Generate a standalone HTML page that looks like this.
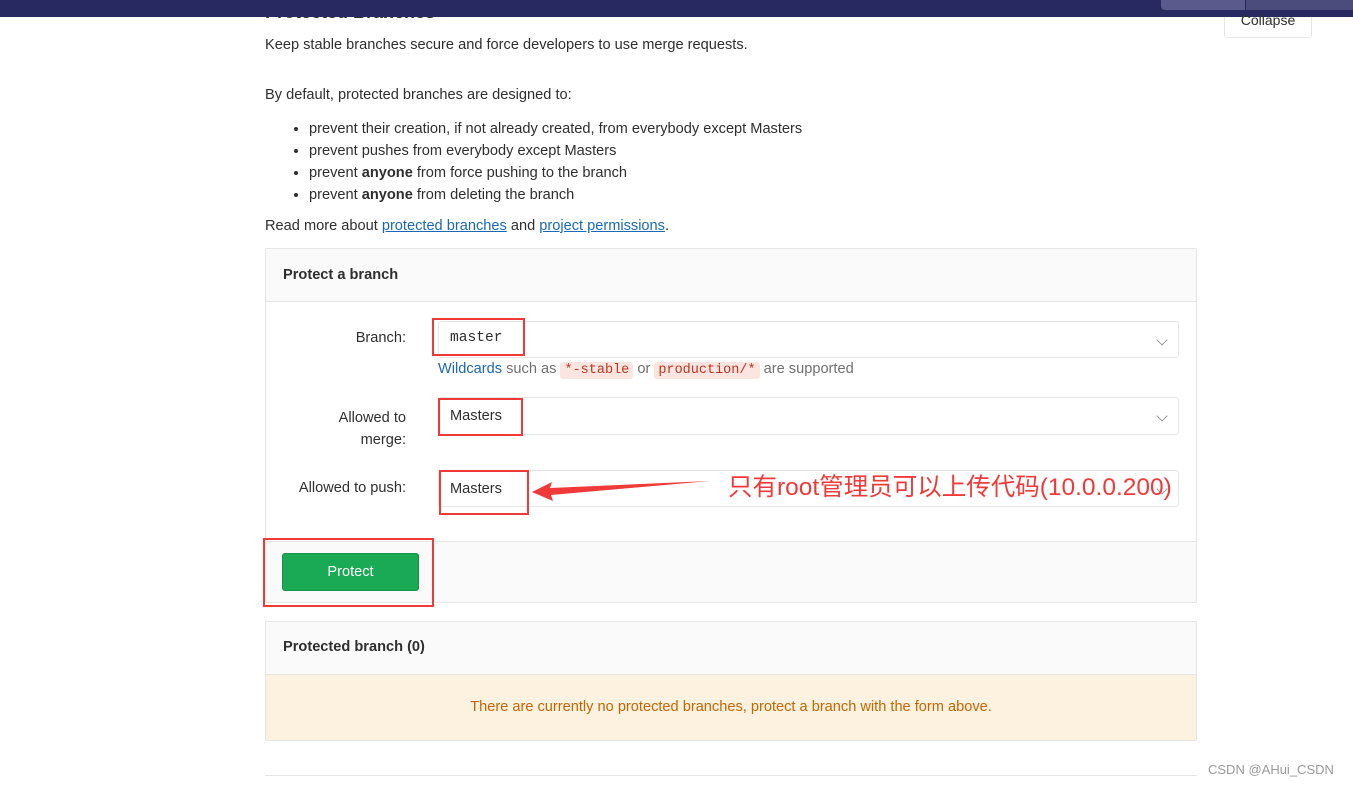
<!DOCTYPE html>
<html><head><meta charset="utf-8"><style>
*{box-sizing:border-box;margin:0;padding:0}
body{width:1353px;height:786px;overflow:hidden;background:#fff;font-family:"Liberation Sans",sans-serif;font-size:14.6px;color:#2e2e2e;position:relative}
.a{position:absolute}
.top{left:0;top:0;width:1353px;height:17px;background:#292961}
a{color:#1b69b6;text-decoration:underline}
.box{border:1px solid #e5e5e5;border-radius:2px}
.sel{border:1px solid #e5e5e5;border-radius:3px;background:#fff}
.chev{position:absolute;right:12px;top:14px;width:8px;height:8px;border-right:1.5px solid #999;border-bottom:1.5px solid #999;transform:rotate(45deg)}
.red{border:2px solid #f03a3a}
code{font-family:"Liberation Mono",monospace;color:#c0341d;background:#fbe5e1;padding:1px 4px;border-radius:3px;font-size:13.5px}
.lbl{text-align:right;width:140px;color:#2e2e2e}
</style></head><body>
<div class="a" style="left:265px;top:2px;font-weight:bold;font-size:18px">Protected Branches</div>
<div class="a top"></div>
<div class="a" style="left:1161px;top:0;width:84px;height:10px;background:#5a5a8c;border-radius:0 0 0 4px"></div>
<div class="a" style="left:1246px;top:0;width:107px;height:10px;background:#4b4b7c"></div>
<div class="a" style="left:1224px;top:17px;width:88px;height:21px;border:1px solid #e5e5e5;border-top:none;border-radius:0 0 3px 3px;text-align:center;font-size:14px;line-height:6px;color:#2e2e2e;background:#fff">Collapse</div>
<div class="a" style="left:265px;top:37px">Keep stable branches secure and force developers to use merge requests.</div>
<div class="a" style="left:265px;top:87px">By default, protected branches are designed to:</div>
<ul class="a" style="left:309px;top:118px;line-height:22px">
<li>prevent their creation, if not already created, from everybody except Masters</li>
<li>prevent pushes from everybody except Masters</li>
<li>prevent <b>anyone</b> from force pushing to the branch</li>
<li>prevent <b>anyone</b> from deleting the branch</li>
</ul>
<div class="a" style="left:265px;top:218px">Read more about <a>protected branches</a> and <a>project permissions</a>.</div>

<div class="a box" style="left:265px;top:248px;width:932px;height:355px"></div>
<div class="a" style="left:266px;top:249px;width:930px;height:53px;background:#fafafa;border-bottom:1px solid #e5e5e5"></div>
<div class="a" style="left:283px;top:267px;font-weight:bold">Protect a branch</div>

<div class="a lbl" style="left:266px;top:330px">Branch:</div>
<div class="a sel" style="left:438px;top:321px;width:741px;height:37px"><div class="chev"></div></div>
<div class="a red" style="left:432px;top:318px;width:93px;height:38px"></div>
<div class="a" style="left:450px;top:330px;font-family:'Liberation Mono',monospace;font-size:14.6px">master</div>
<div class="a" style="left:438px;top:361px;color:#707070"><span style="color:#1b69b6">Wildcards</span> such as <code>*-stable</code> or <code>production/*</code> are supported</div>

<div class="a lbl" style="left:266px;top:407px;line-height:22px">Allowed to<br>merge:</div>
<div class="a sel" style="left:438px;top:397px;width:741px;height:38px"><div class="chev"></div></div>
<div class="a red" style="left:438px;top:398px;width:85px;height:38px"></div>
<div class="a" style="left:450px;top:408px">Masters</div>

<div class="a lbl" style="left:266px;top:480px">Allowed to push:</div>
<div class="a sel" style="left:438px;top:470px;width:741px;height:37px"><div class="chev"></div></div>
<div class="a red" style="left:439px;top:470px;width:90px;height:45px"></div>
<div class="a" style="left:450px;top:481px">Masters</div>
<svg class="a" style="left:530px;top:478px" width="185" height="24"><polygon points="2,14 22,4 20,10 180,3 21,17 23,23" fill="#f03a3a"/></svg>
<div class="a" style="left:728px;top:473px;font-size:24.5px;color:#f03a3a;font-family:'Liberation Sans','Noto Sans CJK SC',sans-serif;line-height:30px">只有root管理员可以上传代码(10.0.0.200)</div>

<div class="a" style="left:266px;top:541px;width:930px;height:61px;background:#fafafa;border-top:1px solid #e5e5e5"></div>
<div class="a" style="left:282px;top:553px;width:137px;height:38px;background:#1aaa55;border:1px solid #168f48;border-radius:3px;color:#fff;text-align:center;line-height:36px">Protect</div>
<div class="a red" style="left:263px;top:538px;width:171px;height:69px"></div>

<div class="a box" style="left:265px;top:621px;width:932px;height:120px"></div>
<div class="a" style="left:266px;top:622px;width:930px;height:53px;background:#fafafa;border-bottom:1px solid #e5e5e5"></div>
<div class="a" style="left:283px;top:639px;font-weight:bold">Protected branch (0)</div>
<div class="a" style="left:266px;top:675px;width:930px;height:65px;background:#fdf1df;color:#c26700;text-align:center;line-height:65px">There are currently no protected branches, protect a branch with the form above.</div>
<div class="a" style="left:265px;top:775px;width:932px;height:1px;background:#e5e5e5"></div>
<div class="a" style="left:1208px;top:762px;color:#999;font-size:13px">CSDN @AHui_CSDN</div>
</body></html>
